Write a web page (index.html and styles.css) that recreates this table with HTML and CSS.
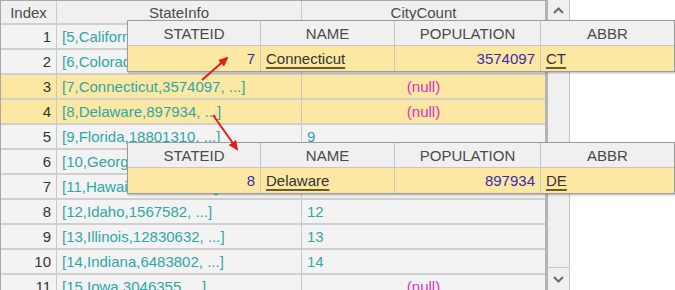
FILE: index.html
```html
<!DOCTYPE html>
<html lang="en">
  <head>
    <meta charset="UTF-8" />
    <title>StateInfo</title>
    <link rel="stylesheet" href="styles.css">
  </head>
  <body>
    <div class="view">
      <div class="main">
        <div class="table">
          <div class="row head">
            <div class="cell">Index</div>
            <div class="cell">StateInfo</div>
            <div class="cell">CityCount</div>
          </div>
          <div class="row">
            <div class="cell idx">1</div>
            <div class="cell ref">[5,California,39144818, ...]</div>
            <div class="cell ref">5</div>
          </div>
          <div class="row">
            <div class="cell idx">2</div>
            <div class="cell ref">[6,Colorado,5456574, ...]</div>
            <div class="cell ref">6</div>
          </div>
          <div class="row sel">
            <div class="cell idx">3</div>
            <div class="cell ref">[7,Connecticut,3574097, ...]</div>
            <div class="cell null">(null)</div>
          </div>
          <div class="row sel">
            <div class="cell idx">4</div>
            <div class="cell ref">[8,Delaware,897934, ...]</div>
            <div class="cell null">(null)</div>
          </div>
          <div class="row">
            <div class="cell idx">5</div>
            <div class="cell ref">[9,Florida,18801310, ...]</div>
            <div class="cell ref">9</div>
          </div>
          <div class="row">
            <div class="cell idx">6</div>
            <div class="cell ref">[10,Georgia,10214860, ...]</div>
            <div class="cell ref">10</div>
          </div>
          <div class="row">
            <div class="cell idx">7</div>
            <div class="cell ref">[11,Hawaii,1360301, ...]</div>
            <div class="cell ref">11</div>
          </div>
          <div class="row">
            <div class="cell idx">8</div>
            <div class="cell ref">[12,Idaho,1567582, ...]</div>
            <div class="cell ref">12</div>
          </div>
          <div class="row">
            <div class="cell idx">9</div>
            <div class="cell ref">[13,Illinois,12830632, ...]</div>
            <div class="cell ref">13</div>
          </div>
          <div class="row">
            <div class="cell idx">10</div>
            <div class="cell ref">[14,Indiana,6483802, ...]</div>
            <div class="cell ref">14</div>
          </div>
          <div class="row">
            <div class="cell idx">11</div>
            <div class="cell ref">[15,Iowa,3046355, ...]</div>
            <div class="cell null">(null)</div>
          </div>
        </div>
        <div class="scrollbar">
          <div class="btn up">
            <svg width="11" height="7" viewBox="0 0 11 7"><polyline points="1,6 5.5,1.5 10,6" /></svg>
          </div>
          <div class="track"></div>
          <div class="btn down">
            <svg width="11" height="7" viewBox="0 0 11 7"><polyline points="1,1 5.5,5.5 10,1" /></svg>
          </div>
        </div>
      </div>

      <!-- record popups -->
      <div class="record rec-ct">
        <div class="rec-row rec-head">
          <div class="rcell">STATEID</div>
          <div class="rcell">NAME</div>
          <div class="rcell">POPULATION</div>
          <div class="rcell">ABBR</div>
        </div>
        <div class="rec-row rec-data">
          <div class="rcell num">7</div>
          <div class="rcell txt"><span>Connecticut</span></div>
          <div class="rcell num">3574097</div>
          <div class="rcell txt"><span>CT</span></div>
        </div>
      </div>

      <div class="record rec-de">
        <div class="rec-row rec-head">
          <div class="rcell">STATEID</div>
          <div class="rcell">NAME</div>
          <div class="rcell">POPULATION</div>
          <div class="rcell">ABBR</div>
        </div>
        <div class="rec-row rec-data">
          <div class="rcell num">8</div>
          <div class="rcell txt"><span>Delaware</span></div>
          <div class="rcell num">897934</div>
          <div class="rcell txt"><span>DE</span></div>
        </div>
      </div>

      <svg class="arrows" width="675" height="290" viewBox="0 0 675 290">
        <defs>
          <marker id="head" markerWidth="10" markerHeight="9" refX="8" refY="4.5" orient="auto" markerUnits="userSpaceOnUse">
            <path d="M0,0 L10,4.5 L0,9 Z" fill="#e41c1c" />
          </marker>
        </defs>
        <line x1="202" y1="80" x2="227" y2="58" stroke="#e41c1c" stroke-width="2" marker-end="url(#head)" />
        <line x1="213" y1="115" x2="237" y2="149" stroke="#e41c1c" stroke-width="2" marker-end="url(#head)" />
      </svg>
    </div>
  </body>
</html>
```

FILE: styles.css
```css
body {
  margin: 0;
  background: #ffffff;
  font-family: "Liberation Sans", Arial, sans-serif;
  font-size: 15px;
  color: #333333;
}

.view {
  position: relative;
  width: 675px;
  height: 290px;
  overflow: hidden;
}

.main {
  display: flex;
  align-items: flex-start;
}

.table {
  width: 544px;
  border-top: 1px solid #a8a8a8;
  border-left: 1px solid #a8a8a8;
  border-right: 3px solid #b4b4b4;
  background: #f3f3f3;
}

.row {
  display: grid;
  grid-template-columns: 56px 245px 243px;
  height: 25px;
}

.row.head {
  height: 24px;
}

.cell {
  box-sizing: border-box;
  display: flex;
  align-items: center;
  padding: 0 5px;
  border-right: 1px solid #c8c8c8;
  border-bottom: 2px solid #cfcfcf;
  white-space: nowrap;
  overflow: hidden;
}

.cell:last-child {
  border-right: none;
}

.head .cell {
  justify-content: center;
  color: #4a4a4a;
  background: #f0f0f0;
}

.idx {
  justify-content: flex-end;
  color: #333333;
}

.ref {
  color: #2fa7a7;
}

.null {
  justify-content: center;
  color: #d930c6;
}

.sel .cell {
  background: #fce8a2;
}

.scrollbar {
  display: flex;
  flex-direction: column;
  width: 21px;
  height: 290px;
  background: #f0f0f0;
  border-right: 1px solid #c4c4c4;
}

.scrollbar .btn {
  height: 20px;
  display: flex;
  align-items: center;
  justify-content: center;
  border-bottom: 1px solid #c8c8c8;
}

.scrollbar .btn.down {
  border-bottom: none;
  border-top: 1px solid #c8c8c8;
  height: 22px;
}

.scrollbar svg polyline {
  fill: none;
  stroke: #6a6a6a;
  stroke-width: 2;
}

.scrollbar .track {
  flex: 1;
}

.record {
  position: absolute;
  left: 127px;
  width: 546px;
  border: 1px solid #9c9c9c;
  box-shadow: 1px 1px 2px rgba(0, 0, 0, 0.3);
  background: #f0f0f0;
}

.rec-ct {
  top: 20px;
}

.rec-de {
  top: 142px;
}

.rec-row {
  display: grid;
  grid-template-columns: 133px 134px 146px 133px;
  height: 25px;
}

.rcell {
  box-sizing: border-box;
  display: flex;
  align-items: center;
  padding: 0 5px;
  border-right: 1px solid #c6c6c6;
  white-space: nowrap;
}

.rcell:last-child {
  border-right: none;
}

.rec-head .rcell {
  justify-content: center;
  color: #4a4a4a;
  border-bottom: 1px solid #c6c6c6;
}

.rec-data {
  background: #fce8a2;
}

.rcell.num {
  justify-content: flex-end;
  color: #3a2cae;
}

.rcell.txt span {
  color: #333333;
  text-decoration: underline;
  text-decoration-color: #6a5c2c;
  text-decoration-thickness: 2px;
  text-underline-offset: 3px;
}

.arrows {
  position: absolute;
  left: 0;
  top: 0;
  pointer-events: none;
}
```
